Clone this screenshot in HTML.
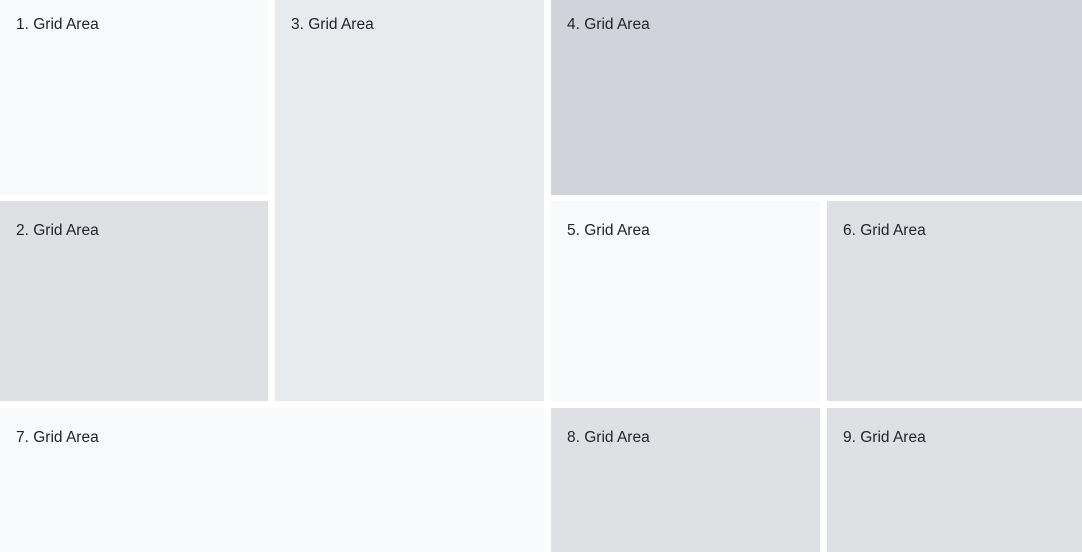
<!DOCTYPE html>
<html><head><style>
html,body{margin:0;padding:0;background:#fff;width:1082px;height:552px;overflow:hidden}
.a{position:absolute;box-sizing:border-box;padding:16px 0 0 16px;font-family:"Liberation Sans",sans-serif;font-size:15.5px;color:#212529;line-height:18px}
.b{padding-top:21px}
</style></head><body>
<div class="a" style="left:0;top:0;width:268px;height:195px;background:#f8f9fb">1. Grid Area</div>
<div class="a b" style="left:0;top:201px;width:268px;height:200px;background:#dfe0e4">2. Grid Area</div>
<div class="a" style="left:275px;top:0;width:269px;height:401px;background:#e8ebee">3. Grid Area</div>
<div class="a" style="left:551px;top:0;width:531px;height:195px;background:#d0d3db">4. Grid Area</div>
<div class="a b" style="left:551px;top:201px;width:269px;height:200px;background:#f8f9fb">5. Grid Area</div>
<div class="a b" style="left:827px;top:201px;width:255px;height:200px;background:#dee0e4">6. Grid Area</div>
<div class="a b" style="left:0;top:408px;width:544px;height:144px;background:#f8f9fb">7. Grid Area</div>
<div class="a b" style="left:551px;top:408px;width:269px;height:144px;background:#dee0e4">8. Grid Area</div>
<div class="a b" style="left:827px;top:408px;width:255px;height:144px;background:#dee0e4">9. Grid Area</div>
</body></html>
